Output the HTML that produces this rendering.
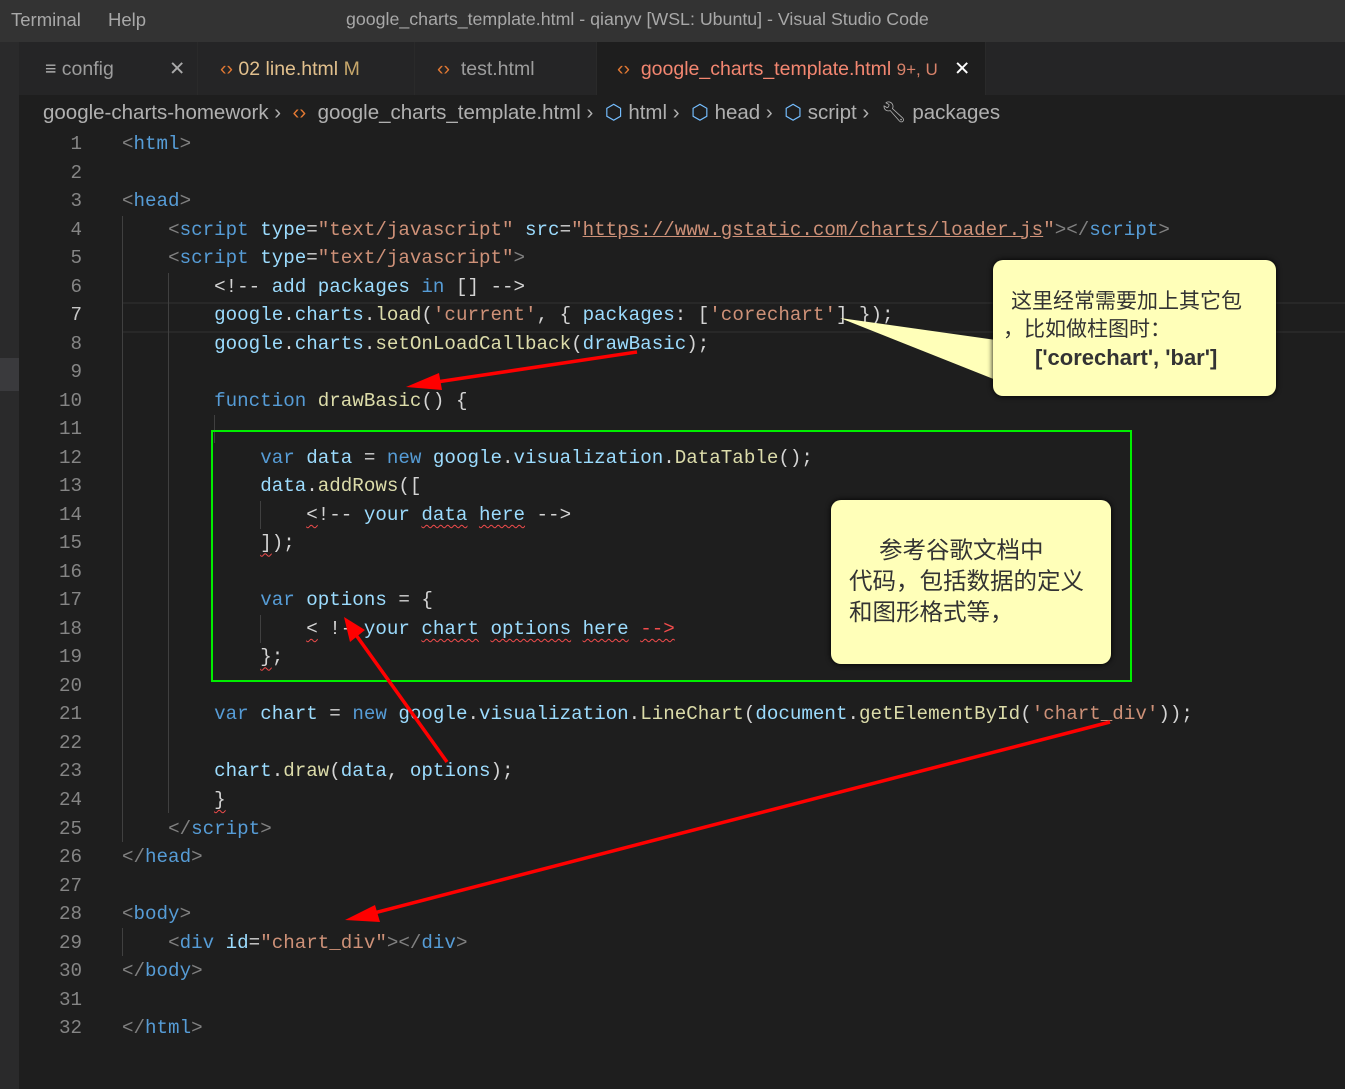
<!DOCTYPE html>
<html><head><meta charset="utf-8"><style>
body{margin:0;width:1345px;height:1089px;background:#1e1e1e;overflow:hidden;position:relative;font-family:"Liberation Sans","Noto Sans CJK SC",sans-serif}
.a{position:absolute}
.ln{position:absolute;left:40px;width:42px;text-align:right;color:#858585;font:19.2px/28px "Liberation Mono",monospace}
.cl{position:absolute;white-space:pre;color:#d4d4d4;font:19.2px/28px "Liberation Mono",monospace}
.g{color:#808080}.t{color:#569cd6}.at{color:#9cdcfe}.s{color:#ce9178}.f{color:#dcdcaa}.v{color:#9cdcfe}.k{color:#569cd6}.c{color:#6a9955}
.sq{text-decoration:underline wavy #f14c4c;text-underline-offset:4px;text-decoration-thickness:1px}
.ig{position:absolute;width:1px;background:#404040}
.tab{position:absolute;top:42px;height:53px;line-height:54px;font-size:19.5px;color:#9d9d9d;border-right:1px solid #2a2a2a}
</style></head><body>
<div class="a" style="left:0;top:0;width:1345px;height:42px;background:#333333"></div>
<div class="a" style="left:11px;top:9px;font-size:18.5px;color:#a8a8a8">Terminal</div>
<div class="a" style="left:108px;top:9px;font-size:18.5px;color:#a8a8a8">Help</div>
<div class="a" style="left:346px;top:9px;font-size:17.8px;color:#a8a8a8">google_charts_template.html - qianyv [WSL: Ubuntu] - Visual Studio Code</div>
<div class="a" style="left:0;top:42px;width:19px;height:1047px;background:#2a2a2b"></div>
<div class="a" style="left:0;top:358px;width:19px;height:33px;background:#3a3a3d"></div>
<div class="a" style="left:19px;top:42px;width:1326px;height:53px;background:#252526"></div>
<div class="tab" style="left:19px;width:178px"><span style="margin-left:26px;color:#aaa">≡</span> config<span style="position:absolute;left:150px;color:#aaa">✕</span></div>
<div class="tab" style="left:198px;width:216px;color:#e2c08d"><span style="margin-left:22px;color:#e37933">‹›</span> 02 line.html <span style="color:#c7a76b">M</span></div>
<div class="tab" style="left:415px;width:181px"><span style="margin-left:22px;color:#e37933">‹›</span>&nbsp; test.html</div>
<div class="tab" style="left:597px;width:388px;background:#1e1e1e;color:#f48771"><span style="margin-left:20px;color:#e37933">‹›</span>&nbsp; google_charts_template.html <span style="color:#d7826a;font-size:17px">9+, U</span><span style="position:absolute;left:357px;color:#fff">✕</span></div>
<div class="a" style="left:43px;top:100px;font-size:20.5px;color:#b0b0b0;white-space:pre">google-charts-homework ›  <span style="color:#e37933">‹›</span>  google_charts_template.html ›  <span style="color:#75beff">⬡</span> html ›  <span style="color:#75beff">⬡</span> head ›  <span style="color:#75beff">⬡</span> script ›  <span>🔧︎</span> packages</div>
<div class="a" style="left:122px;top:302px;width:1223px;height:27px;border-top:2px solid #282828;border-bottom:2px solid #282828"></div>
<div class="ig" style="left:122px;top:216px;height:626px"></div>
<div class="ig" style="left:168px;top:273px;height:540px"></div>
<div class="ig" style="left:214px;top:415px;height:28px"></div>
<div class="ig" style="left:260px;top:501px;height:28px"></div>
<div class="ig" style="left:260px;top:615px;height:28px"></div>
<div class="ig" style="left:122px;top:928px;height:28px"></div>
<div id="code"></div>
<div class="a" style="left:211px;top:430px;width:917px;height:248px;border:2px solid #00ee00"></div>
<svg class="a" style="left:0;top:0" width="1345" height="1089">
<polygon points="840,318 996,340 996,380" fill="#ffffb9"/>
<g stroke="#ff0000" stroke-width="3.5" fill="#ff0000">
<line x1="637" y1="352" x2="430" y2="383"/>
<polygon points="406,387 439,373 442,390" stroke="none"/>
<line x1="447" y1="762" x2="356" y2="635"/>
<polygon points="344,617 365,630 350,642" stroke="none"/>
<line x1="1110" y1="722" x2="370" y2="914"/>
<polygon points="345,920 375,905 380,922" stroke="none"/>
</g></svg>
<div class="a" style="left:993px;top:260px;width:283px;height:136px;background:#ffffb9;border-radius:10px;box-shadow:0 0 6px #000;color:#333;font-size:21px;line-height:28px">
<div style="padding:28px 0 0 18px;white-space:nowrap">这里经常需要加上其它包<br><span style="margin-left:-8px">，比如做柱图时：</span><br><b style="margin-left:24px;font-size:22px">['corechart', 'bar']</b></div></div>
<div class="a" style="left:831px;top:500px;width:280px;height:164px;background:#ffffb9;border-radius:10px;box-shadow:0 0 6px #000;color:#333;font-size:23.5px;line-height:31px">
<div style="padding:35px 0 0 18px;white-space:nowrap">　 参考谷歌文档中<br>代码，包括数据的定义<br>和图形格式等，</div></div>
<script>
const L=[
'<span class=g>&lt;</span><span class=t>html</span><span class=g>&gt;</span>',
'',
'<span class=g>&lt;</span><span class=t>head</span><span class=g>&gt;</span>',
'    <span class=g>&lt;</span><span class=t>script</span> <span class=at>type</span>=<span class=s>"text/javascript"</span> <span class=at>src</span>=<span class=s>"<u>https://www.gstatic.com/charts/loader.js</u>"</span><span class=g>&gt;&lt;/</span><span class=t>script</span><span class=g>&gt;</span>',
'    <span class=g>&lt;</span><span class=t>script</span> <span class=at>type</span>=<span class=s>"text/javascript"</span><span class=g>&gt;</span>',
'        &lt;!-- <span class=v>add packages</span> <span class=k>in</span> [] --&gt;',
'        <span class=v>google</span>.<span class=v>charts</span>.<span class=f>load</span>(<span class=s>\'current\'</span>, { <span class=v>packages</span>: [<span class=s>\'corechart\'</span>] });',
'        <span class=v>google</span>.<span class=v>charts</span>.<span class=f>setOnLoadCallback</span>(<span class=v>drawBasic</span>);',
'',
'        <span class=k>function</span> <span class=f>drawBasic</span>() {',
'',
'            <span class=k>var</span> <span class=v>data</span> = <span class=k>new</span> <span class=v>google</span>.<span class=v>visualization</span>.<span class=f>DataTable</span>();',
'            <span class=v>data</span>.<span class=f>addRows</span>([',
'                <span class=sq>&lt;</span>!-- <span class=v>your</span> <span class="v sq">data</span> <span class="v sq">here</span> --&gt;',
'            <span class=sq>]</span>);',
'',
'            <span class=k>var</span> <span class=v>options</span> = {',
'                <span class=sq>&lt;</span> !--<span class=v>your</span> <span class="v sq">chart</span> <span class="v sq">options</span> <span class="v sq">here</span> <span class=sq style="color:#f14c4c">--&gt;</span>',
'            <span class=sq>}</span>;',
'',
'        <span class=k>var</span> <span class=v>chart</span> = <span class=k>new</span> <span class=v>google</span>.<span class=v>visualization</span>.<span class=f>LineChart</span>(<span class=v>document</span>.<span class=f>getElementById</span>(<span class=s>\'chart_div\'</span>));',
'',
'        <span class=v>chart</span>.<span class=f>draw</span>(<span class=v>data</span>, <span class=v>options</span>);',
'        <span class=sq>}</span>',
'    <span class=g>&lt;/</span><span class=t>script</span><span class=g>&gt;</span>',
'<span class=g>&lt;/</span><span class=t>head</span><span class=g>&gt;</span>',
'',
'<span class=g>&lt;</span><span class=t>body</span><span class=g>&gt;</span>',
'    <span class=g>&lt;</span><span class=t>div</span> <span class=at>id</span>=<span class=s>"chart_div"</span><span class=g>&gt;&lt;/</span><span class=t>div</span><span class=g>&gt;</span>',
'<span class=g>&lt;/</span><span class=t>body</span><span class=g>&gt;</span>',
'',
'<span class=g>&lt;/</span><span class=t>html</span><span class=g>&gt;</span>'];
let h='';L.forEach((l,i)=>{const y=(144+i*28.52-14).toFixed(1);h+=`<div class=ln style="top:${y}px;${i==6?'color:#c6c6c6':''}">${i+1}</div><div class=cl style="left:122px;top:${y}px">${l}</div>`});
document.getElementById('code').innerHTML=h;
</script>
</body></html>
